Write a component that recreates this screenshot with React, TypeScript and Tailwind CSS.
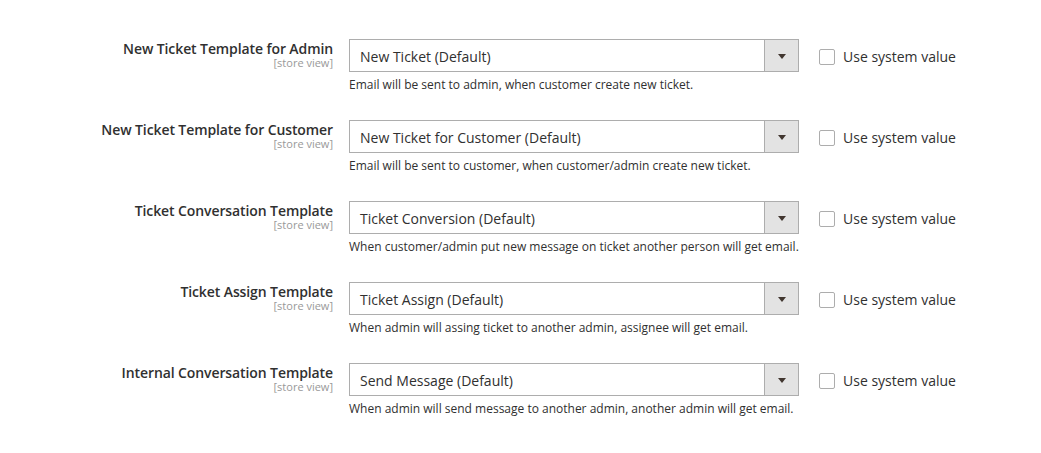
import React from "react";

const rows = [
  {
    label: "New Ticket Template for Admin",
    value: "New Ticket (Default)",
    note: "Email will be sent to admin, when customer create new ticket.",
  },
  {
    label: "New Ticket Template for Customer",
    value: "New Ticket for Customer (Default)",
    note: "Email will be sent to customer, when customer/admin create new ticket.",
  },
  {
    label: "Ticket Conversation Template",
    value: "Ticket Conversion (Default)",
    note: "When customer/admin put new message on ticket another person will get email.",
  },
  {
    label: "Ticket Assign Template",
    value: "Ticket Assign (Default)",
    note: "When admin will assing ticket to another admin, assignee will get email.",
  },
  {
    label: "Internal Conversation Template",
    value: "Send Message (Default)",
    note: "When admin will send message to another admin, another admin will get email.",
  },
];

export default function App() {
  return (
    <div
      className="w-full min-h-[453px] bg-white pt-[39px] text-[#303030]"
      style={{ fontFamily: '"Open Sans", "Liberation Sans", sans-serif' }}
    >
      <div className="flex flex-col gap-[27px]">
        {rows.map((r) => (
          <div key={r.label} className="flex items-start">
            <div className="w-[333px] shrink-0 text-right">
              <div className="mt-[1px] text-[14px] leading-[17px] font-semibold tracking-[-0.1px] text-[#303030]">
                {r.label}
              </div>
              <div className="text-[11px] leading-[11px] text-[#999999]">
                [store view]
              </div>
            </div>
            <div className="ml-[16px] w-[450px] shrink-0">
              <div className="flex h-[33px] border border-[#adadad] bg-white">
                <div className="flex-1 pl-[10px] pt-[7px] text-[14px] leading-[19px] text-[#303030]">
                  {r.value}
                </div>
                <div className="flex w-[34px] items-center justify-center border-l border-[#adadad] bg-[#e3e3e3]">
                  <svg width="8" height="5" viewBox="0 0 8 5" className="mt-[1px]">
                    <polygon points="0,0 8,0 4,5" fill="#41362f" />
                  </svg>
                </div>
              </div>
              <div className="mt-[5px] text-[12px] leading-[16px] text-[#303030]">
                {r.note}
              </div>
            </div>
            <div className="ml-[20px] flex items-start">
              <div className="mt-[10px] h-[16px] w-[16px] rounded-[2px] border border-[#adadad] bg-white" />
              <span className="ml-[8px] mt-[8px] text-[14px] leading-[19px] text-[#303030]">
                Use system value
              </span>
            </div>
          </div>
        ))}
      </div>
    </div>
  );
}
